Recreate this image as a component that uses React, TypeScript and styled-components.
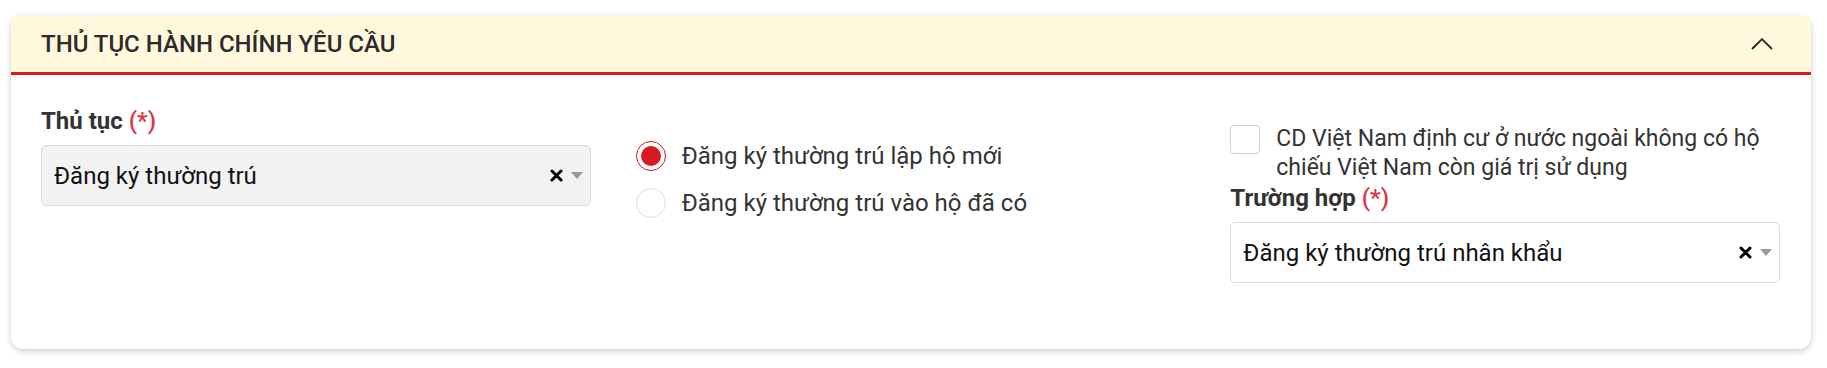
import React from 'react';
import styled, { createGlobalStyle } from 'styled-components';

const GlobalStyle = createGlobalStyle`
  body {
    margin: 0;
    background: #fff;
    font-family: Roboto, "Noto Sans", "Liberation Sans", sans-serif;
  }
  * { box-sizing: border-box; }
`;

const Page = styled.div`
  padding: 15px 16px 19px 11px;
`;

const Card = styled.section`
  background: #fff;
  border-radius: 12px;
  box-shadow: 0 2px 6px rgba(0, 0, 0, 0.2);
  overflow: hidden;
`;

const Header = styled.div`
  height: 60px;
  background: #fff8dc;
  border-bottom: 3px solid #d71920;
  display: flex;
  align-items: center;
  justify-content: space-between;
  padding: 0 38px 0 30px;
`;

const Title = styled.h2`
  margin: 0;
  font-size: 24px;
  font-weight: 500;
  color: #2b2b2b;
`;

const Toggle = styled.button`
  border: 0;
  background: none;
  padding: 0;
  display: flex;
  cursor: pointer;
`;

const Body = styled.div`
  display: grid;
  grid-template-columns: repeat(3, 1fr);
  column-gap: 45px;
  align-items: start;
  padding: 30px 31px 66px 30px;
`;

const Column = styled.div<{ $offset?: number }>`
  display: flex;
  flex-direction: column;
  margin-top: ${p => p.$offset ?? 0}px;
`;

const Label = styled.div`
  font-size: 24px;
  font-weight: 700;
  color: #333;
  line-height: 33px;
  margin-bottom: 7px;
`;

const Required = styled.span`
  color: #dc3545;
  font-weight: 500;
`;

const Select = styled.div<{ $filled?: boolean }>`
  height: 61px;
  display: flex;
  align-items: center;
  gap: 8px;
  padding: 0 7px 0 12px;
  border: 1px solid #dcdcdc;
  border-radius: 5px;
  background: ${p => (p.$filled ? '#f2f2f2' : '#fff')};
  font-size: 24px;
  color: #111;
`;

const SelectValue = styled.span`
  flex: 1;
  white-space: nowrap;
`;

const Clear = styled.span`
  display: flex;
  width: 13px;
`;

const Caret = styled.span`
  width: 0;
  height: 0;
  border-left: 6px solid transparent;
  border-right: 6px solid transparent;
  border-top: 7px solid #999;
`;

const RadioRow = styled.label`
  height: 47px;
  display: flex;
  align-items: center;
  gap: 16px;
  font-size: 24px;
  color: #333;
`;

const RadioMark = styled.span<{ $checked?: boolean }>`
  width: 30px;
  height: 30px;
  border-radius: 50%;
  border: 1.5px solid ${p => (p.$checked ? '#d71920' : '#dcdcdc')};
  background: #fff;
  display: flex;
  align-items: center;
  justify-content: center;
  flex-shrink: 0;

  &::after {
    content: '';
    width: 20px;
    height: 20px;
    border-radius: 50%;
    background: ${p => (p.$checked ? '#d71920' : 'transparent')};
  }
`;

const CheckRow = styled.label`
  display: flex;
  align-items: flex-start;
  gap: 16px;
  font-size: 23px;
  line-height: 29px;
  color: #333;
`;

const CheckBox = styled.span`
  width: 30px;
  height: 29px;
  margin-top: 1px;
  border: 1px solid #d0d0d0;
  border-radius: 4px;
  background: #fff;
  flex-shrink: 0;
`;

const ChevronUp = () => (
  <svg width="22" height="12" viewBox="0 0 22 12">
    <path d="M1 11 L11 1.2 L21 11" fill="none" stroke="#222" strokeWidth="1.8" />
  </svg>
);

const ClearIcon = () => (
  <Clear>
    <svg width="13" height="13" viewBox="0 0 13 13">
      <path d="M2 2 L11 11 M11 2 L2 11" stroke="#000" strokeWidth="3" strokeLinecap="round" />
    </svg>
  </Clear>
);

const Field: React.FC<{ label: string; value: string; filled?: boolean }> = ({ label, value, filled }) => (
  <>
    <Label>
      {label} <Required>(*)</Required>
    </Label>
    <Select $filled={filled}>
      <SelectValue>{value}</SelectValue>
      <ClearIcon />
      <Caret />
    </Select>
  </>
);

const OPTIONS = [
  { text: 'Đăng ký thường trú lập hộ mới', checked: true },
  { text: 'Đăng ký thường trú vào hộ đã có', checked: false },
];

export default function App() {
  return (
    <Page>
      <GlobalStyle />
      <Card>
        <Header>
          <Title>THỦ TỤC HÀNH CHÍNH YÊU CẦU</Title>
          <Toggle aria-label="Thu gọn">
            <ChevronUp />
          </Toggle>
        </Header>
        <Body>
          <Column>
            <Field label="Thủ tục" value="Đăng ký thường trú" filled />
          </Column>
          <Column $offset={27}>
            {OPTIONS.map(o => (
              <RadioRow key={o.text}>
                <RadioMark $checked={o.checked} />
                {o.text}
              </RadioRow>
            ))}
          </Column>
          <Column $offset={19}>
            <CheckRow>
              <CheckBox />
              <span>CD Việt Nam định cư ở nước ngoài không có hộ chiếu Việt Nam còn giá trị sử dụng</span>
            </CheckRow>
            <Field label="Trường hợp" value="Đăng ký thường trú nhân khẩu" />
          </Column>
        </Body>
      </Card>
    </Page>
  );
}
